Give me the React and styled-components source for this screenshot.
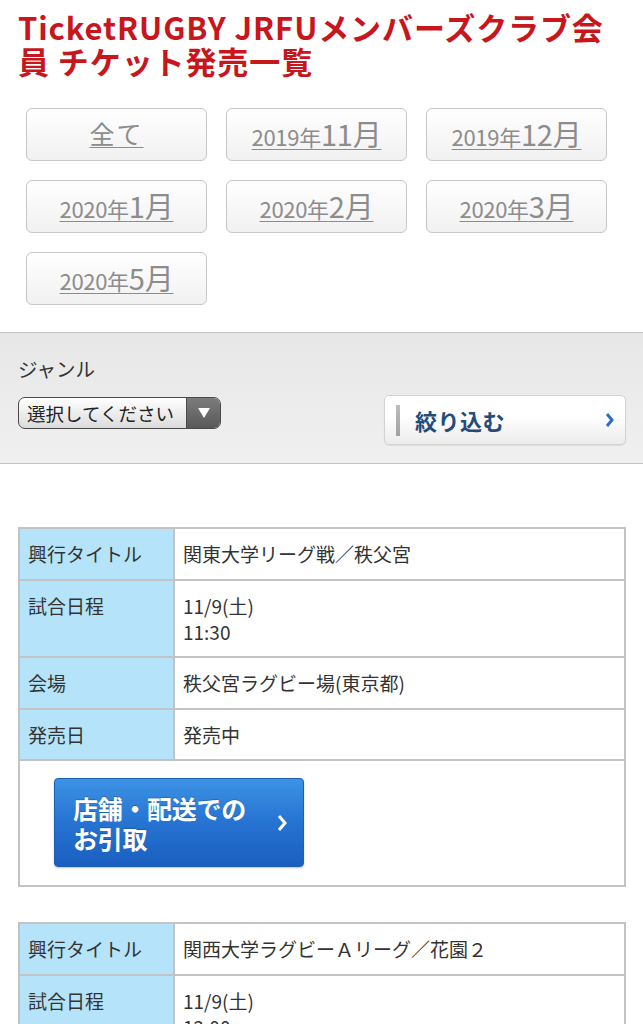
import React from "react"
import styled, { createGlobalStyle } from "styled-components"

const GlobalStyle = createGlobalStyle`
  body {
    margin: 0;
    background: #fff;
    font-family: "Noto Sans CJK JP", "Noto Sans", sans-serif;
    color: #333;
  }
`

const Page = styled.div`
  width: 643px;
  padding-bottom: 40px;
`

const Title = styled.h1`
  margin: 0;
  padding: 10px 30px 0 18px;
  font-size: 31px;
  line-height: 34px;
  font-weight: 700;
  color: #c8161d;
  letter-spacing: 0.9px;
`

const MonthGrid = styled.div`
  display: grid;
  grid-template-columns: repeat(3, 181px);
  grid-auto-rows: 53px;
  gap: 19px;
  margin: 30px 0 0;
  padding: 0 26px;
`

const MonthButton = styled.a`
  display: flex;
  align-items: center;
  justify-content: center;
  box-sizing: border-box;
  border: 1px solid #c6c6c6;
  border-radius: 6px;
  background: linear-gradient(#ffffff, #f1f1f1);
  cursor: pointer;
`

const MonthLabel = styled.span`
  line-height: 1;
  padding-bottom: 3px;
  color: #8c8c8c;
  text-decoration: underline;
  text-decoration-thickness: 1px;
  text-underline-offset: 3px;
`

const Small = styled.span`
  font-size: 22px;
  letter-spacing: -0.3px;
`

const Big = styled.span`
  font-size: ${p => (p.$all ? "25px" : "29px")};
  letter-spacing: ${p => (p.$all ? "2px" : "-0.2px")};
`

const Filter = styled.div`
  margin-top: 27px;
  border-top: 1px solid #c4c4c4;
  border-bottom: 1px solid #c4c4c4;
  background: linear-gradient(#e7e7e7, #f0f0f0);
  padding: 22px 17px 18px 18px;
  display: flex;
  justify-content: space-between;
  align-items: flex-end;
`

const FilterLeft = styled.div`
  display: flex;
  flex-direction: column;
  gap: 14px;
  margin-bottom: 16px;
`

const FilterLabel = styled.div`
  font-size: 19.5px;
  line-height: 28px;
  color: #333;
`

const Select = styled.div`
  display: flex;
  width: 203px;
  height: 32px;
  box-sizing: border-box;
  border: 1px solid #4a4a4a;
  border-radius: 7px;
  overflow: hidden;
  background: linear-gradient(#ffffff, #dcdcdc);
`

const SelectText = styled.span`
  flex: 1;
  padding-left: 8px;
  font-size: 18.5px;
  line-height: 30px;
  color: #222;
`

const SelectArrow = styled.span`
  width: 33px;
  display: flex;
  align-items: center;
  justify-content: center;
  background: linear-gradient(#7c7c7c, #595959);
  border-left: 1px solid #4a4a4a;
`

const NarrowButton = styled.button`
  display: flex;
  align-items: center;
  width: 242px;
  height: 50px;
  padding: 0 8px 0 11px;
  box-sizing: border-box;
  border: 1px solid #d2d2d2;
  border-radius: 5px;
  background: linear-gradient(#ffffff 40%, #ececec);
  box-shadow: 0 1px 1px rgba(0, 0, 0, 0.08);
  font-family: inherit;
  cursor: pointer;
`

const GrayBar = styled.span`
  width: 4px;
  height: 31px;
  background: linear-gradient(#bdbdbd, #a2a2a2);
  margin-right: 15px;
`

const NarrowText = styled.span`
  flex: 1;
  text-align: left;
  font-size: 22px;
  font-weight: 700;
  color: #234c7c;
  letter-spacing: 0.5px;
`

const Chevron = styled.svg`
  flex: none;
  margin-right: ${p => p.$mr || 0}px;
`

const Events = styled.div`
  margin-top: 63px;
  padding: 0 17px 0 18px;
  display: flex;
  flex-direction: column;
  gap: 35px;
`

const Table = styled.table`
  width: 608px;
  border-collapse: collapse;
  font-size: 19px;
  line-height: 26px;
  color: #333;
`

const Th = styled.th`
  width: 137px;
  background: #b5e4fa;
  border: 2px solid #c3c3c3;
  padding: 12px 8px 11.5px;
  text-align: left;
  font-weight: 400;
  vertical-align: top;
`

const Td = styled.td`
  background: #fff;
  border: 2px solid #c3c3c3;
  padding: 12px 8px 11.5px;
  vertical-align: top;
`

const ActionCell = styled.td`
  border: 2px solid #c3c3c3;
  padding: 17px 34px 18px;
`

const PickupButton = styled.a`
  display: flex;
  align-items: center;
  width: 250px;
  height: 89px;
  box-sizing: border-box;
  padding: 0 14px 0 18px;
  border-radius: 4px;
  border: 1px solid #1d5fb5;
  background: linear-gradient(#3c93e3, #2673d2 50%, #1a5fc0);
  box-shadow: 0 1px 2px rgba(0, 0, 0, 0.25);
  color: #fff;
  cursor: pointer;
`

const PickupText = styled.span`
  flex: 1;
  font-size: 25px;
  font-weight: 700;
  line-height: 30px;
  letter-spacing: -0.3px;
  text-shadow: 0 -1px 0 rgba(0, 0, 0, 0.2);
`

const months = [
  { all: true },
  { y: "2019年", m: "11月" },
  { y: "2019年", m: "12月" },
  { y: "2020年", m: "1月" },
  { y: "2020年", m: "2月" },
  { y: "2020年", m: "3月" },
  { y: "2020年", m: "5月" },
]

const events = [
  {
    title: "関東大学リーグ戦／秩父宮",
    date: "11/9(土)",
    time: "11:30",
    venue: "秩父宮ラグビー場(東京都)",
    sale: "発売中",
  },
  {
    title: "関西大学ラグビーＡリーグ／花園２",
    date: "11/9(土)",
    time: "12:00",
    venue: "花園ラグビー場(大阪府)",
    sale: "発売中",
  },
]

const EventTable = ({ ev }) => (
  <Table>
    <tbody>
      <tr>
        <Th>興行タイトル</Th>
        <Td>{ev.title}</Td>
      </tr>
      <tr>
        <Th>試合日程</Th>
        <Td>
          {ev.date}
          <br />
          {ev.time}
        </Td>
      </tr>
      <tr>
        <Th>会場</Th>
        <Td>{ev.venue}</Td>
      </tr>
      <tr>
        <Th>発売日</Th>
        <Td>{ev.sale}</Td>
      </tr>
      <tr>
        <ActionCell colSpan={2}>
          <PickupButton>
            <PickupText>
              店舗・配送での
              <br />
              お引取
            </PickupText>
            <Chevron width="10" height="18" viewBox="0 0 10 18" $mr={2}>
              <path d="M2 2l6 7-6 7" fill="none" stroke="#fff" strokeWidth="3" />
            </Chevron>
          </PickupButton>
        </ActionCell>
      </tr>
    </tbody>
  </Table>
)

const App = () => (
  <Page>
    <GlobalStyle />
    <Title>TicketRUGBY JRFUメンバーズクラブ会員 チケット発売一覧</Title>
    <MonthGrid>
      {months.map((mo, i) => (
        <MonthButton key={i}>
          {mo.all ? (
            <MonthLabel>
              <Big $all>全て</Big>
            </MonthLabel>
          ) : (
            <MonthLabel>
              <Small>{mo.y}</Small>
              <Big>{mo.m}</Big>
            </MonthLabel>
          )}
        </MonthButton>
      ))}
    </MonthGrid>
    <Filter>
      <FilterLeft>
        <FilterLabel>ジャンル</FilterLabel>
        <Select>
          <SelectText>選択してください</SelectText>
          <SelectArrow>
            <svg width="14" height="12" viewBox="0 0 14 12">
              <path d="M1 1h12L7 11z" fill="#fff" />
            </svg>
          </SelectArrow>
        </Select>
      </FilterLeft>
      <NarrowButton>
        <GrayBar />
        <NarrowText>絞り込む</NarrowText>
        <Chevron width="10" height="16" viewBox="0 0 10 16" $mr={2}>
          <path d="M2 2l5 6-5 6" fill="none" stroke="#2a6fc2" strokeWidth="3" />
        </Chevron>
      </NarrowButton>
    </Filter>
    <Events>
      {events.map((ev, i) => (
        <EventTable key={i} ev={ev} />
      ))}
    </Events>
  </Page>
)

export default App
